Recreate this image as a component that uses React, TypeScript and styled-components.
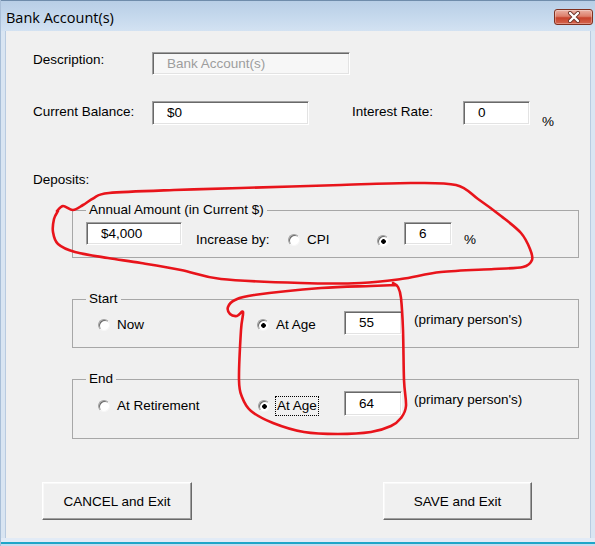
import React from 'react'
import styled, { createGlobalStyle } from 'styled-components'

const GlobalStyle = createGlobalStyle`
  html, body {
    margin: 0;
    padding: 0;
    background: #fff;
  }
  body {
    font-family: 'Liberation Sans', Arial, sans-serif;
    font-size: 13.5px;
    color: #000;
  }
  * {
    box-sizing: border-box;
  }
`

const Window = styled.div`
  position: relative;
  width: 595px;
  height: 546px;
  display: flex;
  flex-direction: column;
  background: #d9e5f2;
  border-left: 1px solid #a9bfd8;
  overflow: hidden;
`

const TitleBar = styled.div`
  height: 31px;
  flex: none;
  display: flex;
  align-items: center;
  justify-content: space-between;
  padding: 2px 2px 0 5px;
  background: linear-gradient(#b8cee6 0%, #c6d9ed 55%, #d3e2f2 100%);
  border-top: 1px solid #6f8cab;
`

const Title = styled.span`
  font-family: 'Open Sans', 'Noto Sans', sans-serif;
  font-size: 14.5px;
  color: #000;
`

const CloseButton = styled.div`
  width: 39px;
  height: 16px;
  border: 1px solid #80301f;
  border-radius: 3px;
  background: linear-gradient(#ebb2a5 0%, #dd7f6b 45%, #c7432c 56%, #d5644d 100%);
  box-shadow: inset 0 0 0 1px rgba(255, 255, 255, 0.3);
  display: flex;
  align-items: center;
  justify-content: center;
`

const Client = styled.div`
  flex: 1;
  margin: 0 5px 0 5px;
  background: #f0f0f0;
  box-shadow: -1px 0 0 #b9cbe0, 1px 0 0 #b9cbe0;
  padding: 21px 0 0 27px;
  display: flex;
  flex-direction: column;
`

const BottomFrame = styled.div`
  height: 8px;
  flex: none;
  background: linear-gradient(#e2ebf6 0 4px, #1ea6c8 4px 6px, #c9dbee 6px);
`

const Row = styled.div<{ $top?: number; $height: number }>`
  display: flex;
  align-items: center;
  height: ${p => p.$height}px;
  margin-top: ${p => p.$top ?? 0}px;
`

const Label = styled.span<{ $width?: number; $left?: number; $lift?: number }>`
  flex: none;
  width: ${p => (p.$width ? `${p.$width}px` : 'auto')};
  margin-left: ${p => p.$left ?? 0}px;
  margin-bottom: ${p => (p.$lift ?? 0) * 2}px;
  line-height: 16px;
  white-space: nowrap;
`

const Caption = styled.span<{ $width?: number; $left?: number; $drop?: number }>`
  flex: none;
  width: ${p => (p.$width ? `${p.$width}px` : 'auto')};
  margin-left: ${p => p.$left ?? 0}px;
  margin-top: ${p => Math.max(0, (p.$drop ?? 0) * 2)}px;
  margin-bottom: ${p => Math.max(0, -(p.$drop ?? 0) * 2)}px;
  line-height: 16px;
  white-space: nowrap;
`

const TextBox = styled.div<{ $width: number; $height: number; $disabled?: boolean }>`
  flex: none;
  width: ${p => p.$width}px;
  height: ${p => p.$height}px;
  padding-left: 14px;
  display: flex;
  align-items: center;
  background: ${p => (p.$disabled ? '#f7f7f7' : '#fff')};
  color: ${p => (p.$disabled ? '#9d9d9d' : '#000')};
  border: 1px solid;
  border-color: #a0a0a0 #ffffff #ffffff #a0a0a0;
  box-shadow: inset 1px 1px 0 #696969, inset -1px -1px 0 #e3e3e3;
  line-height: 16px;
  white-space: nowrap;
`

const Group = styled.fieldset<{ $top: number; $bottom: number }>`
  margin: ${p => p.$top}px 0 0 39px;
  width: 507px;
  min-width: 0;
  border: 1px solid #a7a7a7;
  padding: 4px 0 ${p => p.$bottom}px 13px;
`

const GroupTitle = styled.legend`
  padding: 0 3px;
  line-height: 16px;
  font-size: 13.5px;
`

const Option = styled.div<{ $width: number; $left?: number; $drop?: number }>`
  flex: none;
  width: ${p => p.$width}px;
  margin-left: ${p => p.$left ?? 0}px;
  margin-top: ${p => (p.$drop ?? 0) * 2}px;
  display: flex;
  align-items: center;
  gap: 5px;
`

const RadioMark = styled.span<{ $checked?: boolean }>`
  flex: none;
  width: 12px;
  height: 12px;
  border-radius: 50%;
  border: 1px solid;
  border-color: #a0a0a0 #f6f6f6 #f6f6f6 #a0a0a0;
  box-shadow: inset 1px 1px 0 #6a6a6a;
  background: ${p =>
    p.$checked ? 'radial-gradient(circle at 55% 55%, #000 0 2px, #fff 2.6px)' : '#fff'};
`

const OptionText = styled.span<{ $focused?: boolean }>`
  padding: 1px 1px;
  line-height: 16px;
  border: 1px dotted ${p => (p.$focused ? '#000' : 'transparent')};
  white-space: nowrap;
`

const ButtonRow = styled.div`
  display: flex;
  margin-top: 43px;
`

const Button = styled.button<{ $left: number; $width: number }>`
  margin-left: ${p => p.$left}px;
  width: ${p => p.$width}px;
  height: 38px;
  background: #f0f0f0;
  border: 1px solid;
  border-color: #ffffff #696969 #696969 #ffffff;
  box-shadow: inset -1px -1px 0 #a0a0a0, inset 1px 1px 0 #f8f8f8;
  font-family: 'Liberation Sans', Arial, sans-serif;
  font-size: 13.5px;
  color: #000;
  padding: 0;
`

const Ink = styled.svg`
  position: absolute;
  left: 0;
  top: 0;
  pointer-events: none;
`

type Pt = [number, number]

function smooth(pts: Pt[]): string {
  let d = `M${pts[0][0]},${pts[0][1]}`
  for (let i = 0; i < pts.length - 1; i++) {
    const p0 = pts[i - 1] ?? pts[i]
    const p1 = pts[i]
    const p2 = pts[i + 1]
    const p3 = pts[i + 2] ?? p2
    const c1x = p1[0] + (p2[0] - p0[0]) / 6
    const c1y = p1[1] + (p2[1] - p0[1]) / 6
    const c2x = p2[0] - (p3[0] - p1[0]) / 6
    const c2y = p2[1] - (p3[1] - p1[1]) / 6
    d += ` C${c1x.toFixed(1)},${c1y.toFixed(1)} ${c2x.toFixed(1)},${c2y.toFixed(1)} ${p2[0]},${p2[1]}`
  }
  return d
}

const annualLoop: Pt[] = [
  [56, 211], [62, 206], [72, 210], [82, 205], [93, 198], [108, 193], [173, 190],
  [240, 188], [340, 185], [410, 183], [455, 185], [477, 199], [500, 216], [520, 233],
  [529, 249], [531, 260], [522, 267], [493, 269], [440, 272], [400, 279], [360, 283],
  [300, 283], [220, 279], [180, 270], [140, 263], [107, 258], [74, 252], [57, 244],
  [52, 232], [53, 219], [57, 211],
]

const ageLoop: Pt[] = [
  [395, 285], [370, 286], [320, 288], [253, 295], [234, 300], [227, 307], [229, 314],
  [236, 316], [242, 312], [240, 330], [238, 380], [241, 397], [250, 411], [272, 423],
  [303, 432], [337, 434], [370, 432], [390, 426], [400, 418], [405, 406], [403, 380],
  [402, 330], [400, 298], [397, 287], [392, 283],
]

export default function App() {
  return (
    <>
      <GlobalStyle />
      <Window>
        <TitleBar>
          <Title>Bank Account(s)</Title>
          <CloseButton>
            <svg width="16" height="12" viewBox="0 0 16 12">
              <path d="M4 2 L12 10 M12 2 L4 10" stroke="#6b3127" strokeWidth="4" strokeLinecap="round" />
              <path d="M4 2 L12 10 M12 2 L4 10" stroke="#ffffff" strokeWidth="2.4" strokeLinecap="round" />
            </svg>
          </CloseButton>
        </TitleBar>

        <Client>
          <Row $height={23}>
            <Label $width={119} $lift={3.5}>Description:</Label>
            <TextBox $width={198} $height={23} $disabled>Bank Account(s)</TextBox>
          </Row>

          <Row $top={26} $height={24}>
            <Label $width={119} $lift={1}>Current Balance:</Label>
            <TextBox $width={157} $height={24}>$0</TextBox>
            <Label $width={111} $left={43} $lift={1}>Interest Rate:</Label>
            <TextBox $width={67} $height={24}>0</TextBox>
            <Caption $left={12} $drop={9}>%</Caption>
          </Row>

          <Row $top={47} $height={16}>
            <Label>Deposits:</Label>
          </Row>

          <Group $top={14} $bottom={12}>
            <GroupTitle>Annual Amount (in Current $)</GroupTitle>
            <Row $height={23}>
              <TextBox $width={96} $height={23}>$4,000</TextBox>
              <Caption $width={92} $left={14} $drop={6.5}>Increase by:</Caption>
              <Option $width={89} $drop={6.5}>
                <RadioMark />
                <OptionText>CPI</OptionText>
              </Option>
              <Option $width={27} $drop={7.5}>
                <RadioMark $checked />
              </Option>
              <TextBox $width={48} $height={23}>6</TextBox>
              <Caption $left={12} $drop={6.5}>%</Caption>
            </Row>
          </Group>

          <Group $top={33} $bottom={12}>
            <GroupTitle>Start</GroupTitle>
            <Row $height={24}>
              <Option $width={159} $left={12} $drop={2}>
                <RadioMark />
                <OptionText>Now</OptionText>
              </Option>
              <Option $width={87} $drop={2}>
                <RadioMark $checked />
                <OptionText>At Age</OptionText>
              </Option>
              <TextBox $width={58} $height={24}>55</TextBox>
              <Caption $left={12} $drop={-3}>(primary person's)</Caption>
            </Row>
          </Group>

          <Group $top={23} $bottom={22}>
            <GroupTitle>End</GroupTitle>
            <Row $height={25}>
              <Option $width={160} $left={12} $drop={2}>
                <RadioMark />
                <OptionText>At Retirement</OptionText>
              </Option>
              <Option $width={86} $drop={2}>
                <RadioMark $checked />
                <OptionText $focused>At Age</OptionText>
              </Option>
              <TextBox $width={58} $height={25}>64</TextBox>
              <Caption $left={12} $drop={-3.5}>(primary person's)</Caption>
            </Row>
          </Group>

          <ButtonRow>
            <Button $left={9} $width={150}>CANCEL and Exit</Button>
            <Button $left={191} $width={149}>SAVE and Exit</Button>
          </ButtonRow>
        </Client>

        <BottomFrame />

        <Ink width="595" height="546" viewBox="0 0 595 546">
          <g fill="none" stroke="#e8141b" strokeWidth="2.6" strokeLinecap="round" strokeLinejoin="round">
            <path d={smooth(annualLoop)} />
            <path d={smooth(ageLoop)} />
          </g>
        </Ink>
      </Window>
    </>
  )
}
